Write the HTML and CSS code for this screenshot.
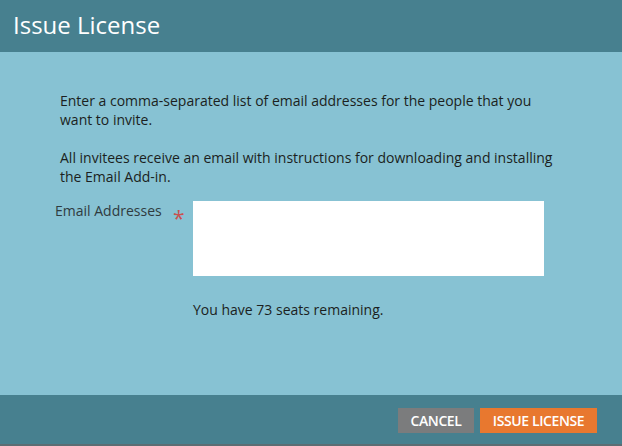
FILE: index.html
```html
<!DOCTYPE html>
<html>
<head>
<meta charset="utf-8">
<link rel="stylesheet" href="styles.css">
</head>
<body>
<div class="dialog">
  <header class="header"><h1 class="title">Issue License</h1></header>
  <main class="content">
    <p class="para">Enter a comma-separated list of email addresses for the people that you want to invite.</p>
    <p class="para">All invitees receive an email with instructions for downloading and installing the Email Add-in.</p>
    <div class="field">
      <label class="label">Email Addresses</label>
      <span class="req">*</span>
      <textarea class="input"></textarea>
    </div>
    <div class="seats">You have 73 seats remaining.</div>
  </main>
  <footer class="footer">
    <button class="btn btn-cancel">CANCEL</button>
    <button class="btn btn-primary">ISSUE LICENSE</button>
  </footer>
</div>
</body>
</html>
```
FILE: styles.css
```css
html, body {
  margin: 0;
  padding: 0;
}
body {
  width: 622px;
  height: 446px;
  overflow: hidden;
  font-family: "Open Sans", "Liberation Sans", sans-serif;
}
.dialog {
  display: flex;
  flex-direction: column;
  height: 446px;
  background: #87c2d3;
}
.header {
  height: 52px;
  background: #47808f;
  display: flex;
  align-items: center;
  padding-left: 13px;
}
.title {
  margin: 0;
  color: #ffffff;
  font-size: 24px;
  font-weight: 400;
  line-height: 1;
  margin-top: -2px;
}
.content {
  flex: 1;
  padding: 39px 0 0 60px;
  color: #1b1f21;
}
.para {
  margin: 0 0 19px 0;
  width: 500px;
  font-size: 14px;
  line-height: 19px;
}
.field {
  display: flex;
  align-items: flex-start;
  margin-left: -5px;
  margin-top: -4px;
}
.label {
  font-size: 14px;
  line-height: 19px;
  color: #2f3b40;
  width: 118px;
}
.req {
  color: #c9514f;
  font-size: 21px;
  line-height: 20px;
  margin-top: 7px;
  width: 20px;
}
.input {
  width: 351px;
  height: 75px;
  border: none;
  background: #ffffff;
  padding: 0;
  margin: 0;
  resize: none;
  display: block;
}
.seats {
  margin-left: 133px;
  margin-top: 24px;
  font-size: 14px;
  line-height: 19px;
}
.footer {
  height: 49px;
  background: #47808f;
  border-bottom: 2px solid #5c6d73;
  display: flex;
  justify-content: flex-end;
  align-items: center;
  gap: 6px;
  padding-right: 25px;
}
.btn {
  border: none;
  height: 25px;
  padding: 0;
  font-family: "Open Sans", "Liberation Sans", sans-serif;
  font-size: 14px;
  font-weight: 600;
  color: #ffffff;
  letter-spacing: -0.4px;
  margin-top: 1px;
}
.btn-cancel {
  background: #7b7c7d;
  width: 76px;
}
.btn-primary {
  background: #e8782f;
  width: 117px;
}
```
